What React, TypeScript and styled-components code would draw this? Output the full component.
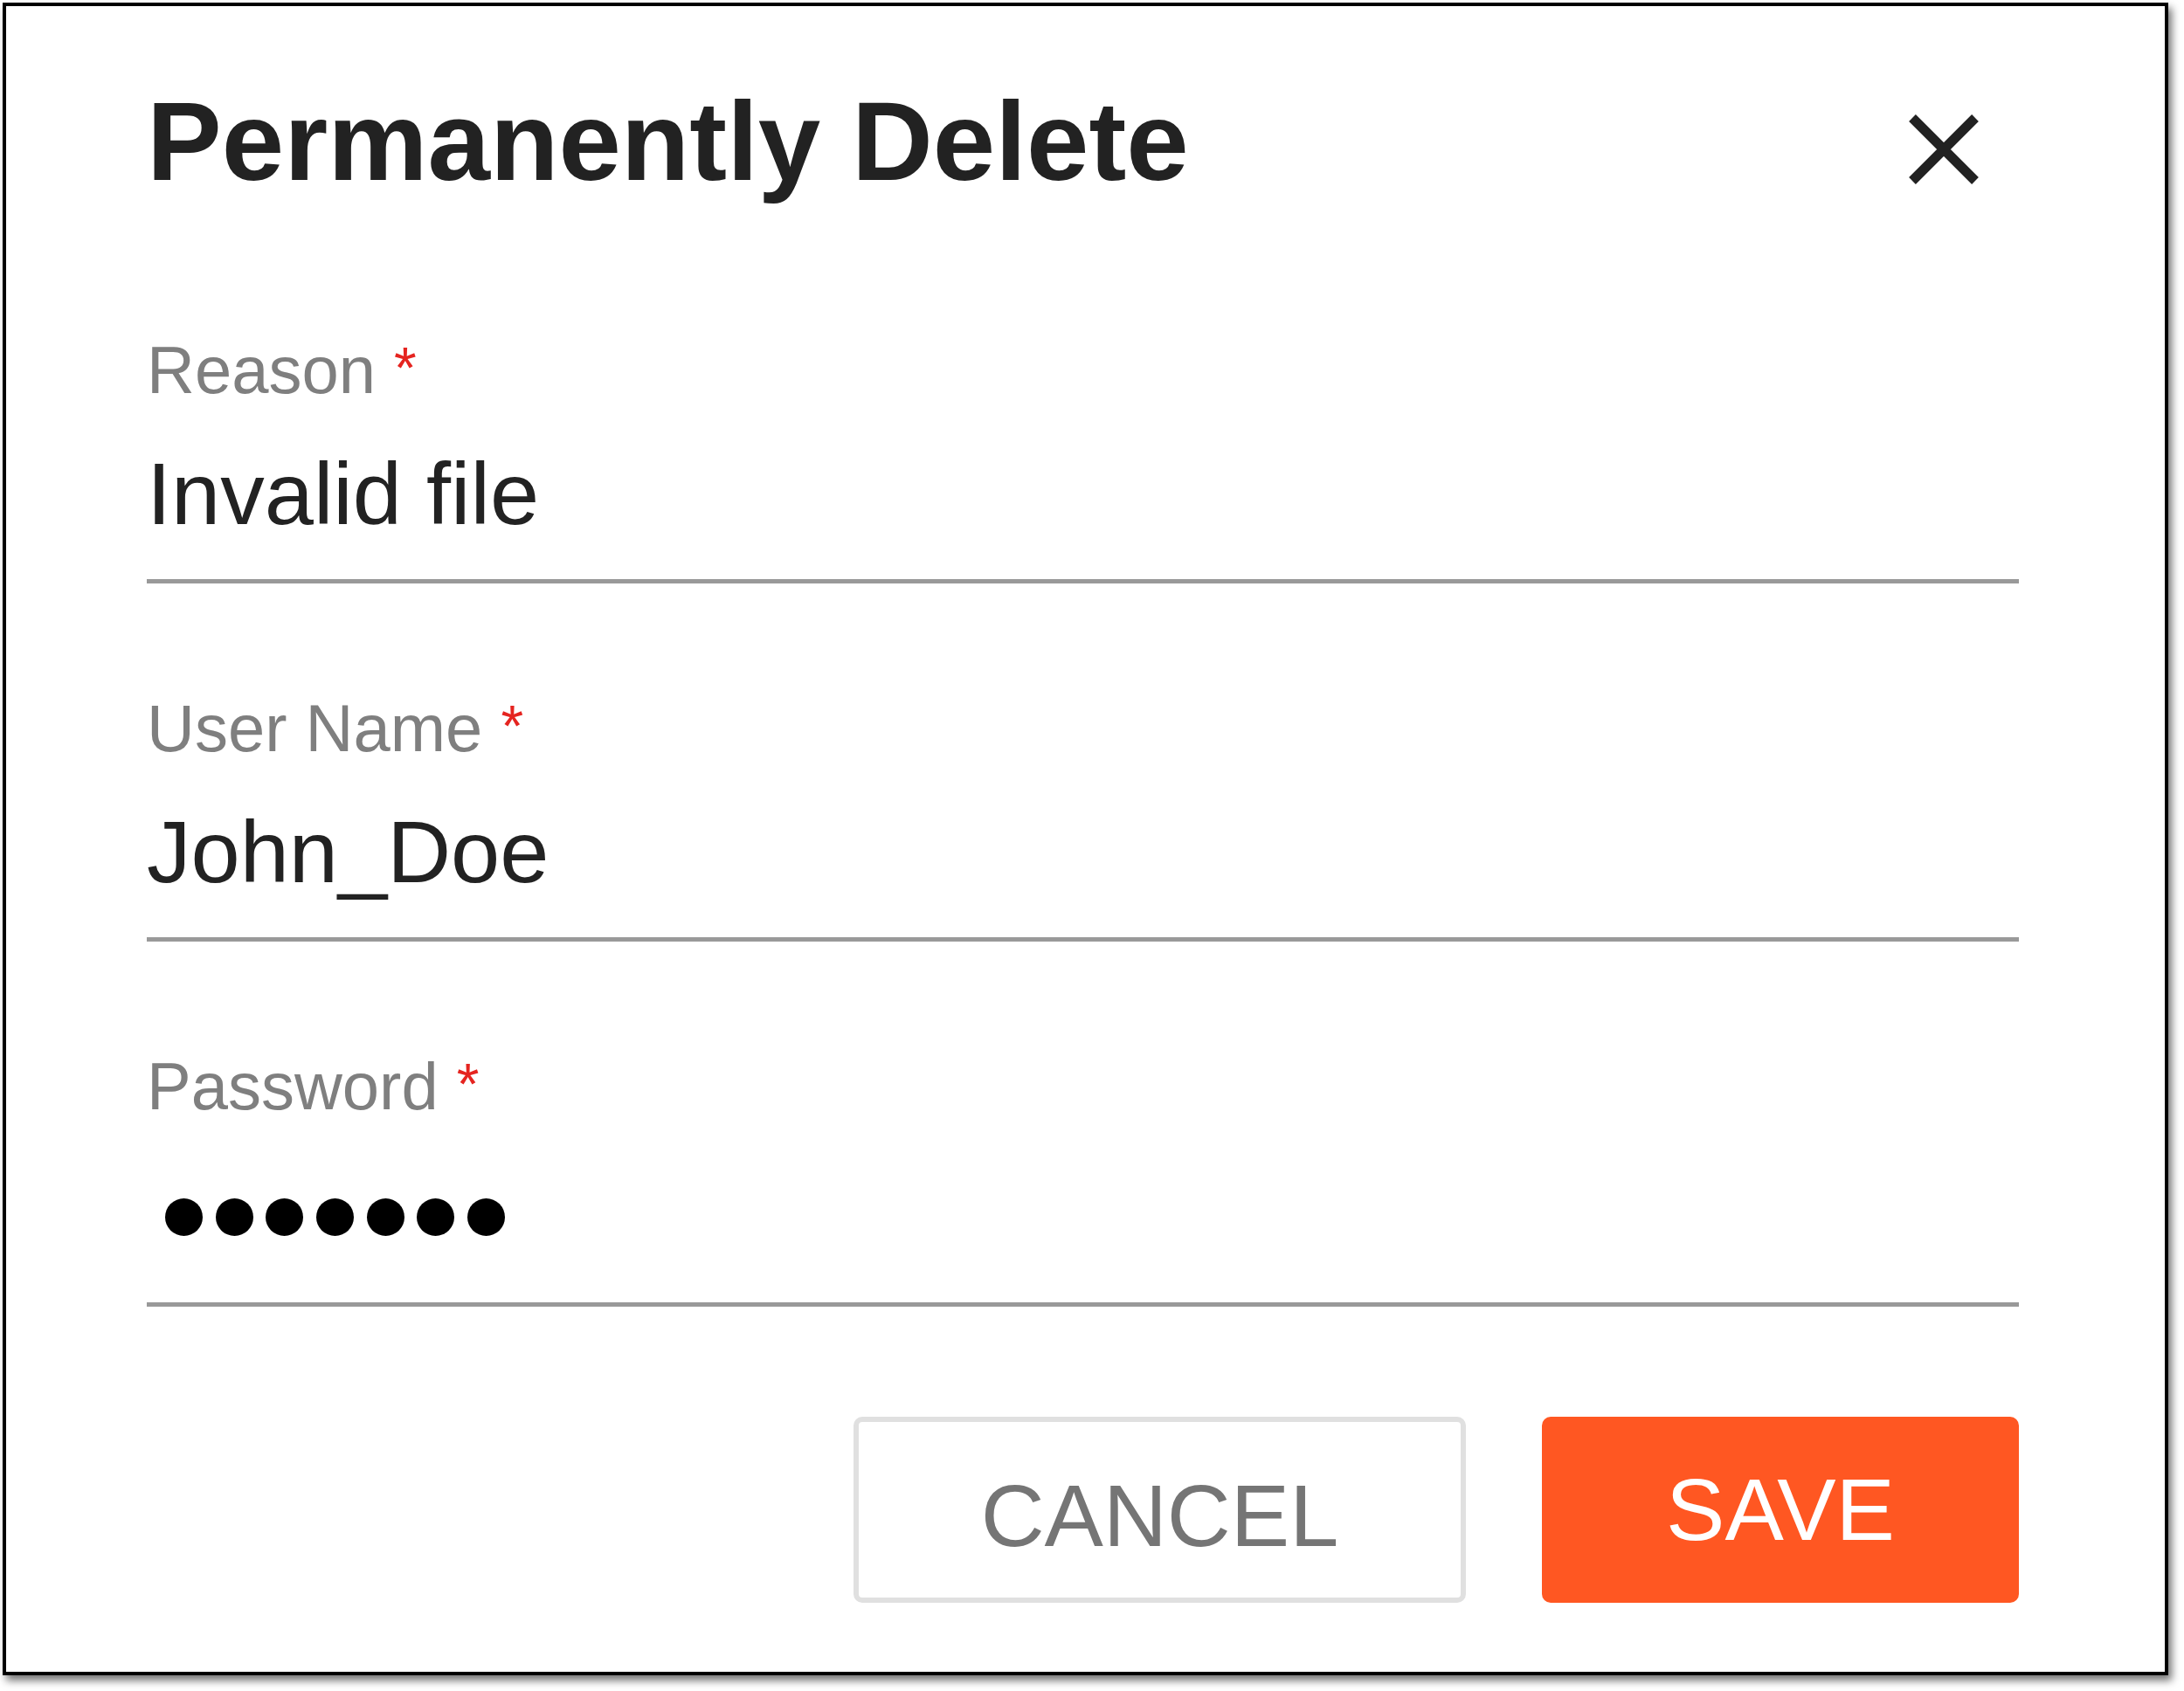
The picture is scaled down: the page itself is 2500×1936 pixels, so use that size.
import React from 'react';
import styled, { createGlobalStyle } from 'styled-components';

const GlobalStyle = createGlobalStyle`
  html, body {
    margin: 0;
    padding: 0;
    background: #fff;
  }

  body {
    font-family: 'Liberation Sans', Arial, Helvetica, sans-serif;
  }
`;

const Page = styled.div`
  width: 2500px;
  height: 1936px;
  padding: 3px 0 0 3px;
  box-sizing: border-box;
  background: #fff;
`;

const Dialog = styled.div`
  width: 2479px;
  box-sizing: border-box;
  display: flex;
  flex-direction: column;
  padding: 90px 167px 79px 161px;
  border: 4px solid #000;
  background: #fff;
  box-shadow: 4px 6px 9px rgba(0, 0, 0, 0.55);
`;

const Header = styled.div`
  display: flex;
  justify-content: space-between;
  align-items: flex-start;
`;

const Title = styled.h1`
  margin: 0;
  font-size: 128.5px;
  line-height: 130px;
  font-weight: 700;
  color: #222;
`;

const CloseButton = styled.button`
  width: 84px;
  height: 84px;
  margin: 32px 44px 0 0;
  padding: 0;
  display: flex;
  border: none;
  background: none;
  cursor: pointer;
`;

const Form = styled.div`
  margin-top: 159px;
  display: flex;
  flex-direction: column;
  gap: 128px;
`;

const Field = styled.div`
  display: flex;
  flex-direction: column;
`;

const Label = styled.label`
  font-size: 76px;
  line-height: 76px;
  color: #7f7f7f;
  white-space: pre;
`;

const Required = styled.span`
  font-size: 66px;
  line-height: 0;
  vertical-align: 6px;
  color: #e52420;
`;

const Value = styled.div`
  margin-top: 53px;
  font-size: 101px;
  line-height: 101px;
  color: #222;
`;

const Dots = styled.div`
  margin-top: 53px;
  height: 116px;
  padding-left: 21px;
  display: flex;
  align-items: center;
  gap: 14.7px;
`;

const Dot = styled.span`
  width: 43px;
  height: 43px;
  border-radius: 50%;
  background: #000;
`;

const Underline = styled.div<{ $gap: number }>`
  margin-top: ${(p) => p.$gap}px;
  height: 5px;
  background: #999;
`;

const Actions = styled.div`
  margin-top: 126px;
  display: flex;
  justify-content: flex-end;
  gap: 87px;
`;

const Button = styled.button<{ $primary?: boolean; $width: number }>`
  width: ${(p) => p.$width}px;
  height: 213px;
  box-sizing: border-box;
  display: flex;
  justify-content: center;
  align-items: center;
  padding: ${(p) => (p.$primary ? '0' : '13px 0 0')};
  border: ${(p) => (p.$primary ? 'none' : '6px solid #e0e0e0')};
  border-radius: 10px;
  background: ${(p) => (p.$primary ? '#ff5722' : '#fff')};
  color: ${(p) => (p.$primary ? '#fff' : '#757575')};
  font-family: 'Liberation Sans', Arial, Helvetica, sans-serif;
  font-size: 101px;
  line-height: 1;
  cursor: pointer;
`;

const CloseIcon = () => (
  <svg width="84" height="84" viewBox="0 0 84 84">
    <path d="M6 6 L78 78 M78 6 L6 78" stroke="#222" strokeWidth="11" fill="none" />
  </svg>
);

const fields = [
  { label: 'Reason', value: 'Invalid file' },
  { label: 'User Name', value: 'John_Doe' },
];

const App = () => (
  <Page>
    <GlobalStyle />
    <Dialog>
      <Header>
        <Title>Permanently Delete</Title>
        <CloseButton aria-label="Close">
          <CloseIcon />
        </CloseButton>
      </Header>
      <Form>
        {fields.map((f) => (
          <Field key={f.label}>
            <Label>
              {f.label} <Required>*</Required>
            </Label>
            <Value>{f.value}</Value>
            <Underline $gap={47} />
          </Field>
        ))}
        <Field>
          <Label>
            Password <Required>*</Required>
          </Label>
          <Dots>
            {Array.from({ length: 7 }).map((_, i) => (
              <Dot key={i} />
            ))}
          </Dots>
          <Underline $gap={40} />
        </Field>
      </Form>
      <Actions>
        <Button $width={701}>CANCEL</Button>
        <Button $primary $width={546}>SAVE</Button>
      </Actions>
    </Dialog>
  </Page>
);

export default App;
